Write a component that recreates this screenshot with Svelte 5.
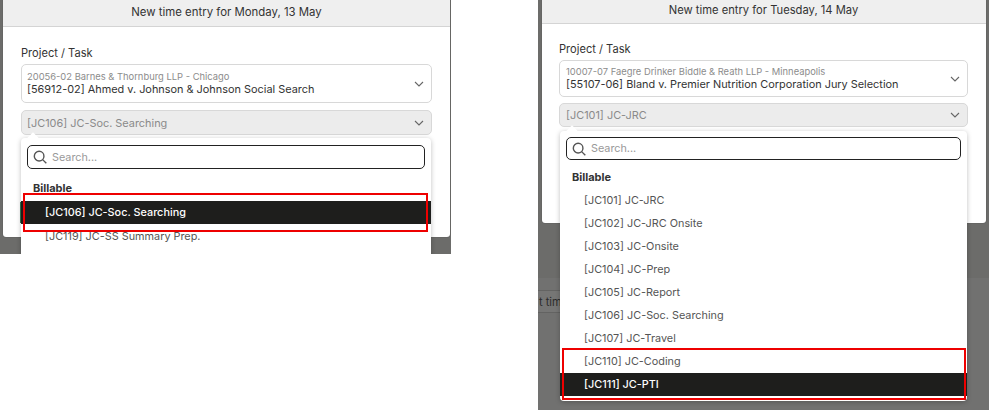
<script>
  const rightItems = [
    '[JC101] JC-JRC',
    '[JC102] JC-JRC Onsite',
    '[JC103] JC-Onsite',
    '[JC104] JC-Prep',
    '[JC105] JC-Report',
    '[JC106] JC-Soc. Searching',
    '[JC107] JC-Travel',
    '[JC110] JC-Coding',
    '[JC111] JC-PTI'
  ];

  const leftItems = ['[JC106] JC-Soc. Searching', '[JC119] JC-SS Summary Prep.'];
</script>

{#snippet chevron()}
  <svg class="chevron" width="12" height="12" viewBox="0 0 12 12" fill="none" stroke="#666" stroke-width="1.1">
    <path d="M2 4l4 4 4-4" />
  </svg>
{/snippet}

{#snippet entry(title, client, matter, task, items, selected)}
  <div class="modal">
    <div class="modal-title">{title}</div>
    <div class="modal-body">
      <div class="label">Project / Task</div>
      <div class="select project">
        <div class="project-text">
          <div class="client">{client}</div>
          <div class="matter">{matter}</div>
        </div>
        {@render chevron()}
      </div>
      <div class="select task">
        <span>{task}</span>
        {@render chevron()}
      </div>
      <div class="dropdown">
        <div class="caret"></div>
        <div class="search">
          <svg width="14" height="14" viewBox="0 0 16 16" fill="none" stroke="#555" stroke-width="1.6">
            <circle cx="7" cy="7" r="5.5" />
            <path d="M11 11l4.2 4.2" />
          </svg>
          <span>Search...</span>
        </div>
        <div class="group">Billable</div>
        {#each items as item}
          <div class="item" class:selected={item === selected}>{item}</div>
        {/each}
      </div>
    </div>
  </div>
{/snippet}

<div class="page">
  <section class="shot left">
    <div class="save"></div>
    {@render entry('New time entry for Monday, 13 May', '20056-02 Barnes & Thornburg LLP - Chicago', '[56912-02] Ahmed v. Johnson & Johnson Social Search', '[JC106] JC-Soc. Searching', leftItems, '[JC106] JC-Soc. Searching')}
    <div class="highlight"></div>
  </section>
  <section class="shot right">
    <div class="backdrop-band"></div>
    <div class="backdrop-button">t tim</div>
    {@render entry('New time entry for Tuesday, 14 May', '10007-07 Faegre Drinker Biddle & Reath LLP - Minneapolis', '[55107-06] Bland v. Premier Nutrition Corporation Jury Selection', '[JC101] JC-JRC', rightItems, '[JC111] JC-PTI')}
    <div class="highlight"></div>
  </section>
</div>

<style>
  :global(body) {
    background: #fff;
  }

  .page {
    display: flex;
    justify-content: space-between;
    align-items: flex-start;
    width: 989px;
    height: 410px;
    overflow: hidden;
    font-family: Inter, "Liberation Sans", sans-serif;
    color: #333;
  }

  .shot {
    position: relative;
    overflow: hidden;
    box-sizing: border-box;
    width: 451px;
    background: #6c6c6a;
  }

  .left {
    height: 254px;
    padding: 0 1px 0 3px;
  }

  .right {
    height: 410px;
    padding: 0 3.5px 0 3.5px;
  }

  .backdrop-band {
    position: absolute;
    left: 0;
    right: 0;
    top: 278px;
    bottom: 0;
    background: #717170;
  }

  .backdrop-button {
    position: absolute;
    left: -6px;
    top: 290px;
    width: 60px;
    height: 23px;
    padding-left: 6px;
    box-sizing: border-box;
    border: 1px solid #636362;
    border-radius: 3px;
    background: #767675;
    font-size: 11px;
    line-height: 22px;
    color: #2c2c2c;
  }

  .modal {
    position: relative;
    background: #fff;
    border-radius: 0 0 3px 3px;
    box-shadow: 0 0 1px rgba(0, 0, 0, 0.5);
  }

  .left .modal {
    height: 237px;
  }

  .right .modal {
    height: 223px;
  }

  .modal-title {
    height: 26px;
    border-bottom: 1px solid #d4d4d4;
    background: #efefef;
    text-align: center;
    font-size: 11.4px;
    line-height: 25px;
    color: #333;
  }

  .right .modal-title {
    height: 23px;
    font-size: 11.2px;
    line-height: 21px;
  }

  .modal-body {
    padding: 18px 18px 0;
  }

  .right .modal-body {
    padding-top: 17px;
    padding-left: 17.5px;
  }

  .label {
    font-size: 11.1px;
    line-height: 16px;
    margin-bottom: 3px;
  }

  .select {
    display: flex;
    align-items: center;
    justify-content: space-between;
    box-sizing: border-box;
    width: 411px;
    padding: 0 6px 0 5px;
    border: 1px solid #d8d8d8;
    border-radius: 5px;
    font-size: 10.9px;
  }

  .right .select {
    width: 409px;
    padding-left: 6px;
  }

  .project {
    height: 39px;
    margin-bottom: 7px;
  }

  .right .project {
    height: 37px;
    margin-bottom: 6px;
  }

  .client {
    font-size: 9.4px;
    line-height: 11px;
    color: #8c8c8c;
  }

  .matter {
    line-height: 15px;
    color: #333;
  }

  .task {
    height: 25px;
    background: #ececec;
    color: #8a8a8a;
  }

  .right .task {
    height: 24px;
  }

  .dropdown {
    position: relative;
    box-sizing: border-box;
    width: 410px;
    height: 130px;
    margin-top: 3px;
    padding-top: 7px;
    background: #fff;
    border-radius: 4px;
    box-shadow: 0 1px 5px rgba(0, 0, 0, 0.25);
  }

  .right .dropdown {
    width: 407px;
    height: 270px;
    margin: 4px 0 0 1px;
    padding-top: 6px;
  }

  .caret {
    position: absolute;
    left: 8px;
    top: -4px;
    width: 8px;
    height: 8px;
    background: #fff;
    transform: rotate(45deg);
  }

  .search {
    position: relative;
    display: flex;
    align-items: center;
    gap: 5px;
    box-sizing: border-box;
    height: 24px;
    margin: 0 6px;
    padding: 0 5px;
    border: 1.5px solid #222;
    border-radius: 5px;
    background: #fff;
    font-size: 10.8px;
    color: #999;
  }

  .right .search {
    height: 23px;
  }

  .group {
    margin: 11px 0 5px;
    padding: 0 12px;
    font-size: 11px;
    font-weight: 700;
    line-height: 16px;
    color: #333;
  }

  .right .group {
    margin: 9px 0 4px;
  }

  .item {
    height: 23px;
    padding-left: 24px;
    font-size: 10.85px;
    line-height: 23px;
    color: #555;
  }

  .left .item:not(.selected) {
    line-height: 25px;
  }

  .item.selected {
    background: #1e1e1c;
    color: #fff;
    font-weight: 500;
  }

  .save {
    position: absolute;
    z-index: 1;
    left: 20px;
    top: 202px;
    width: 1px;
    height: 21px;
    background: #2f6b45;
  }

  .highlight {
    position: absolute;
    z-index: 2;
    box-sizing: border-box;
    border: 2px solid #ee0000;
  }

  .left .highlight {
    left: 23px;
    top: 193px;
    width: 405px;
    height: 39px;
  }

  .right .highlight {
    left: 24px;
    top: 348px;
    width: 404px;
    height: 52px;
  }
</style>
